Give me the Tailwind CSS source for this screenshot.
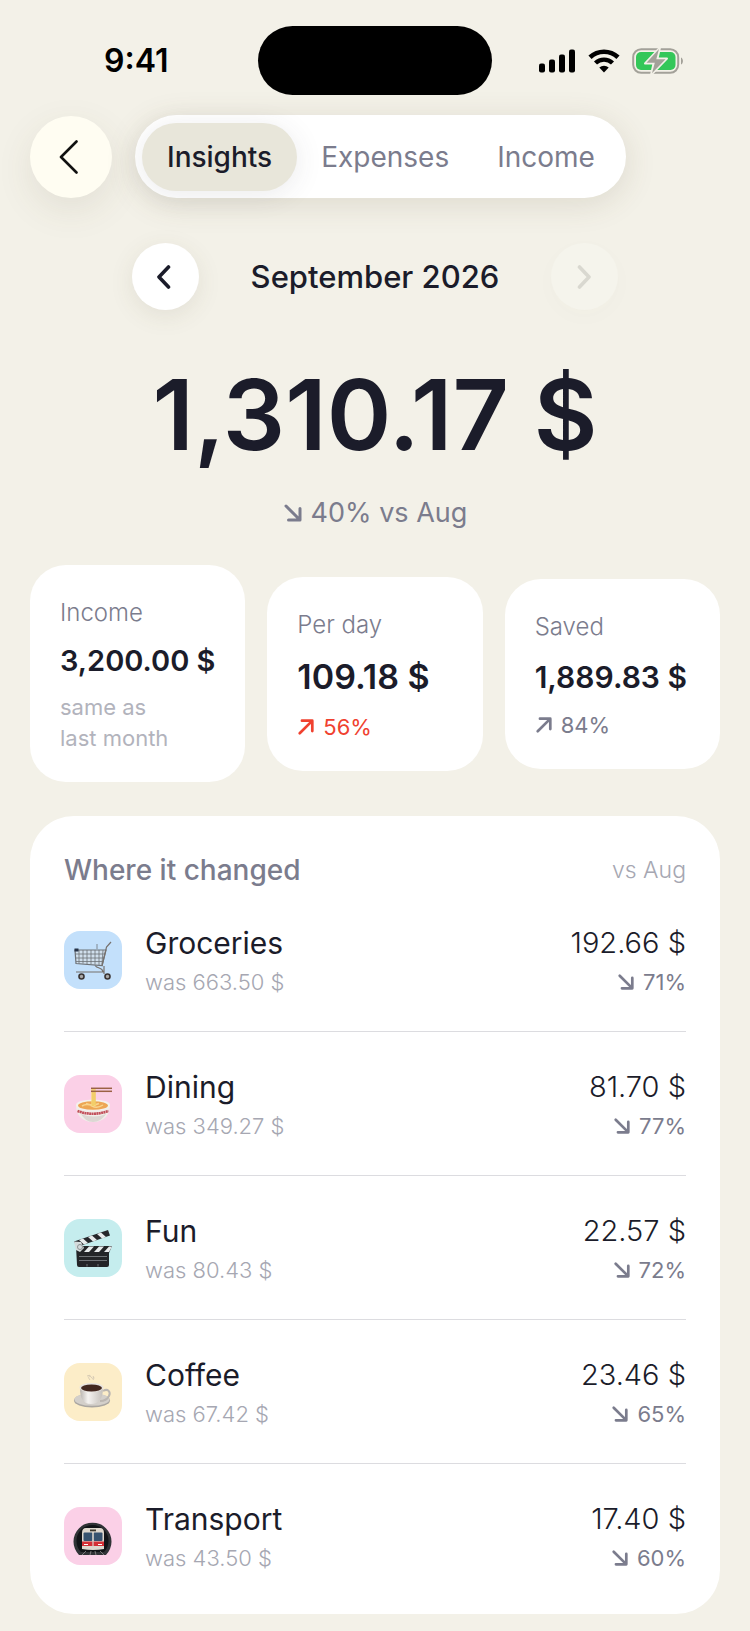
<!DOCTYPE html>
<html lang="en">

<head>
    <meta charset="UTF-8" />
    <meta name="viewport" content="width=device-width, initial-scale=1.0" />
    <title>Insights – September 2026</title>
    <script src="https://cdn.jsdelivr.net/npm/@tailwindcss/browser@4"></script>
</head>

<body class="bg-[#f3f1e8] min-h-screen font-['Inter','Liberation_Sans',sans-serif] text-[#1b1c2a]">
    <!-- shared icons -->
    <svg class="hidden" aria-hidden="true">
        <symbol id="arrow-down" viewBox="0 0 20 20">
            <path d="M3 3 16 16M17 5.500V17H5.500" fill="none" stroke="currentColor" stroke-width="3" stroke-linecap="round" stroke-linejoin="round" />
        </symbol>
        <symbol id="arrow-up" viewBox="0 0 20 20">
            <path d="M3 17 16 4M5.500 3H17V14.500" fill="none" stroke="currentColor" stroke-width="3" stroke-linecap="round" stroke-linejoin="round" />
        </symbol>
    </svg>

    <!-- STATUS BAR -->
    <div class="grid grid-cols-[1fr_234px_1fr] items-center pt-[26px]">
        <div class="pl-[104px] text-[32px] leading-9 font-semibold text-black">9:41</div>
        <div class="h-[69px] rounded-full bg-black"></div>
        <div class="flex items-center justify-end gap-3 pr-[66px]">
            <svg class="w-[37px] h-6" viewBox="0 0 37 24" aria-label="Signal">
                <rect x="0" y="14.500" width="6" height="9" rx="2" />
                <rect x="10" y="10.500" width="6" height="13" rx="2" />
                <rect x="20" y="5.500" width="6" height="18" rx="2" />
                <rect x="30" y="0.500" width="6" height="23" rx="2" />
            </svg>
            <svg class="w-8 h-6" viewBox="0 0 32 24" aria-label="Wi-Fi">
                <path d="M2 8.300a20.500 20.500 0 0 1 28 0" fill="none" stroke="#000" stroke-width="4.600" />
                <path d="M7.500 14a12.300 12.300 0 0 1 17 0" fill="none" stroke="#000" stroke-width="4.400" />
                <path d="M16 23.500 11.300 18.600a7 7 0 0 1 9.400 0Z" />
            </svg>
            <svg class="w-[52px] h-[26px] overflow-visible" viewBox="0 0 52 26" aria-label="Battery charging">
                <rect x="1.200" y="1.200" width="45" height="23.600" rx="8" fill="none" stroke="#a3a199" stroke-width="2" />
                <path d="M49 9.500c2.600 1 2.600 6 0 7Z" fill="#a3a199" />
                <rect x="4" y="4" width="39.500" height="18" rx="5" fill="#34c759" />
                <path d="M28-.5 13 15.500h8.500l-2.500 11.500L35 10.500H25.500Z" fill="#f3f1e8" stroke="#f3f1e8" stroke-width="2" stroke-linejoin="round" />
                <path d="M27 1 14.500 14.800h8.300l-2.800 10.500L33.500 11.200H24.300Z" fill="#a3a199" />
            </svg>
        </div>
    </div>

    <!-- HEADER -->
    <header class="flex items-center gap-[23px] px-[30px] pt-5">
        <button type="button" aria-label="Back" class="flex size-[82px] items-center justify-center rounded-full bg-[#fffdf2] pr-1 shadow-[0_12px_36px_rgba(90,80,50,0.10)]">
            <svg class="w-5 h-[34px]" viewBox="0 0 20 34">
                <path d="M17.500 1.500 2 17l15.500 15.500" fill="none" stroke="#111" stroke-width="2.600" stroke-linecap="round" stroke-linejoin="round" />
            </svg>
        </button>
        <nav class="flex h-[83px] items-center rounded-full bg-white px-[7px] text-[28px] leading-8 text-[#7b7c8d] shadow-[0_6px_32px_rgba(90,80,50,0.14)]">
            <button type="button" aria-pressed="true" class="h-[68px] rounded-full bg-[#e8e6da] px-[25px] font-medium text-[#1b1c2a] shadow-[0_4px_28px_rgba(60,60,70,0.10)]">Insights</button>
            <button type="button" class="h-[68px] px-6">Expenses</button>
            <button type="button" class="h-[68px] px-6">Income</button>
        </nav>
    </header>

    <main class="px-[30px] pb-[18px]">
        <!-- Month -->
        <div class="mx-auto mt-[45px] flex w-[486px] items-center justify-between">
            <button type="button" aria-label="Previous month" class="flex size-[67px] items-center justify-center rounded-full bg-white shadow-[0_6px_24px_rgba(90,80,50,0.10)]">
                <svg class="w-4 h-6 mr-1" viewBox="0 0 16 24">
                    <path d="M12.500 2 3 12l9.500 10" fill="none" stroke="currentColor" stroke-width="3.600" stroke-linecap="round" stroke-linejoin="round" />
                </svg>
            </button>
            <h1 class="text-[31px] leading-10 font-medium">September 2026</h1>
            <button type="button" disabled aria-label="Next month" class="flex size-[67px] items-center justify-center rounded-full bg-[#f5f4ec] text-[#d9d8d0] shadow-[0_6px_24px_rgba(90,80,50,0.02)]">
                <svg class="w-4 h-6" viewBox="0 0 16 24">
                    <path d="M3.500 2 13 12 3.500 22" fill="none" stroke="currentColor" stroke-width="3.600" stroke-linecap="round" stroke-linejoin="round" />
                </svg>
            </button>
        </div>

        <!-- Total -->
        <p class="mt-[55px] text-center text-[98px] leading-[100px] font-semibold whitespace-nowrap">1,310.17 $</p>
        <p class="mt-[31px] flex items-center justify-center gap-2 text-[27px] leading-[34px] text-[#7b7c8d]">
            <svg class="size-5"><use href="#arrow-down" /></svg>40% vs Aug
        </p>

        <!-- Summary cards -->
        <section class="mt-[35px] grid grid-cols-3 items-center gap-[22px]">
            <div class="rounded-[36px] bg-white px-[30px] pt-8 pb-7">
                <div class="text-[24px] leading-8 font-light text-[#7b7c8d]">Income</div>
                <div class="mt-[14px] text-[29px] leading-9 font-semibold whitespace-nowrap">3,200.00 $</div>
                <div class="mt-[13px] text-[22px] leading-[31px] text-[#b2b3bc]">same as<br />last month</div>
            </div>
            <div class="rounded-[36px] bg-white px-[30px] pt-8 pb-7">
                <div class="text-[24px] leading-8 font-light text-[#7b7c8d]">Per day</div>
                <div class="mt-[14px] text-[34px] leading-[44px] font-semibold whitespace-nowrap">109.18 $</div>
                <div class="mt-[13px] flex items-center gap-2 text-[22px] leading-[31px] text-[#f0412f]">
                    <svg class="size-[18px]"><use href="#arrow-up" /></svg>56%
                </div>
            </div>
            <div class="rounded-[36px] bg-white px-[30px] pt-8 pb-7">
                <div class="text-[24px] leading-8 font-light text-[#7b7c8d]">Saved</div>
                <div class="mt-[14px] text-[30px] leading-10 font-semibold whitespace-nowrap">1,889.83 $</div>
                <div class="mt-[13px] flex items-center gap-2 text-[22px] leading-[31px] text-[#7b7c8d]">
                    <svg class="size-[18px]"><use href="#arrow-up" /></svg>84%
                </div>
            </div>
        </section>

        <!-- Where it changed -->
        <section class="mt-[34px] rounded-[44px] bg-white px-[34px] pb-[6px]">
            <div class="flex items-center justify-between pt-9">
                <h2 class="text-[28px] leading-9 font-medium text-[#7b7c8d]">Where it changed</h2>
                <span class="text-[23px] leading-9 font-light text-[#a6a7b2]">vs Aug</span>
            </div>
            <ul class="divide-y divide-[#dcdce0]">
                <li class="flex h-[144px] items-center gap-[23px]">
                    <svg class="size-[58px] shrink-0" viewBox="0 0 58 58" aria-hidden="true">
                        <rect width="58" height="58" rx="16" fill="#c3e0fb" />
                        <path d="M11 19h31l-4 15.500-26-2Z" fill="#d9dee3" fill-opacity=".6" stroke="#6d7277" stroke-width="1.200" />
                        <path d="M11 23h30M11.500 27h28.500M12 30.500h27M15 19v13.500M19 19v13.500M23 19v14M27 19v14M31 19v14.500M35 19v15M39 19l-1 14M33 18v-5" fill="none" stroke="#6d7277" stroke-width=".8" />
                        <path d="M47 11l-4.500 5L38 35M31 34.500c3 4 7 1 8 6.500H12M40 35v8" fill="none" stroke="#77716d" stroke-width="1.200" />
                        <rect x="10.500" y="17.500" width="4" height="3" fill="#263247" />
                        <circle cx="17.500" cy="45.500" r="2.500" fill="#aaa" stroke="#3a3433" stroke-width="1.600" />
                        <circle cx="43.500" cy="45.500" r="2.500" fill="#aaa" stroke="#3a3433" stroke-width="1.600" />
                    </svg>
                    <div class="flex-1 pt-1">
                        <div class="text-[30px] leading-10">Groceries</div>
                        <div class="text-[22px] leading-[38px] font-light text-[#a6a7b2]">was 663.50 $</div>
                    </div>
                    <div class="pt-1 text-right">
                        <div class="text-[29px] leading-10 font-light">192.66 $</div>
                        <div class="flex items-center justify-end gap-2 text-[22px] leading-[38px] text-[#7b7c8d]"><svg class="size-[18px]"><use href="#arrow-down" /></svg>71%</div>
                    </div>
                </li>
                <li class="flex h-[144px] items-center gap-[23px]">
                    <svg class="size-[58px] shrink-0" viewBox="0 0 58 58" aria-hidden="true">
                        <rect width="58" height="58" rx="16" fill="#fbd0e7" />
                        <path d="M12 30c0 9 5 17 17 17s17-8 17-17Z" fill="#f1eeea" />
                        <path d="M17 39c3 5 7 8 12 8s10-3 13-8q-12 5-25 0Z" fill="#dcd7d3" />
                        <ellipse cx="29" cy="30" rx="17" ry="5.500" fill="#f4f1ec" />
                        <ellipse cx="29" cy="30.500" rx="15" ry="4.300" fill="#eda653" />
                        <path d="M18 31q5-3 10 0t11-1M22 28.500q6 3 13 0" fill="none" stroke="#f8d58e" stroke-width="1.500" />
                        <path d="M13.500 36q15 5.500 31 0" fill="none" stroke="#c2505b" stroke-width="2.600" stroke-dasharray="2 .4" />
                        <path d="M29.500 13v18" stroke="#f7d878" stroke-width="4.400" />
                        <path d="M29 16v15M31 16v14" stroke="#eab94c" stroke-width=".6" />
                        <path d="M27 13.300h21" stroke="#9b6145" stroke-width="1.500" />
                        <path d="M27 16.300h21" stroke="#9b6145" stroke-width="1.500" />
                    </svg>
                    <div class="flex-1 pt-1">
                        <div class="text-[30px] leading-10">Dining</div>
                        <div class="text-[22px] leading-[38px] font-light text-[#a6a7b2]">was 349.27 $</div>
                    </div>
                    <div class="pt-1 text-right">
                        <div class="text-[29px] leading-10 font-light">81.70 $</div>
                        <div class="flex items-center justify-end gap-2 text-[22px] leading-[38px] text-[#7b7c8d]"><svg class="size-[18px]"><use href="#arrow-down" /></svg>77%</div>
                    </div>
                </li>
                <li class="flex h-[144px] items-center gap-[23px]">
                    <svg class="size-[58px] shrink-0" viewBox="0 0 58 58" aria-hidden="true">
                        <rect width="58" height="58" rx="16" fill="#c5edee" />
                        <path d="M10 22.500 44 11l2 5.500L13 28Z" fill="#25272b" />
                        <path d="m15 21 4-1.500 5 4.500-4 1.500ZM24 18l4-1.500 5 4.500-4 1.500ZM33 15l4-1.500 5 4.500-4 1.500Z" fill="#e8ebec" />
                        <path d="M12 27h36l-3 7v12q0 2-2 2H15q-2 0-2-2Z" fill="#232427" />
                        <path d="m20 33 5-5.500h5L25 33ZM30 33l5-5.500h5L35 33ZM40 33l5-5.500h3L45 33Z" fill="#e8ebec" />
                        <path d="M10 22.500 17 23l3 6-4 4-4-2Z" fill="#d5dbdc" />
                        <circle cx="16" cy="28" r="2.500" fill="none" stroke="#8b9092" />
                        <path d="M15 37.500h28M15 41.500h28M23 45v2.500M34 45v2.500" stroke="#83868a" stroke-width=".8" />
                    </svg>
                    <div class="flex-1 pt-1">
                        <div class="text-[30px] leading-10">Fun</div>
                        <div class="text-[22px] leading-[38px] font-light text-[#a6a7b2]">was 80.43 $</div>
                    </div>
                    <div class="pt-1 text-right">
                        <div class="text-[29px] leading-10 font-light">22.57 $</div>
                        <div class="flex items-center justify-end gap-2 text-[22px] leading-[38px] text-[#7b7c8d]"><svg class="size-[18px]"><use href="#arrow-down" /></svg>72%</div>
                    </div>
                </li>
                <li class="flex h-[144px] items-center gap-[23px]">
                    <svg class="size-[58px] shrink-0" viewBox="0 0 58 58" aria-hidden="true">
                        <defs>
                            <linearGradient id="cup">
                                <stop offset="0" stop-color="#b9b4af" />
                                <stop offset=".35" stop-color="#f5f3f1" />
                                <stop offset="1" stop-color="#c4bfba" />
                            </linearGradient>
                        </defs>
                        <rect width="58" height="58" rx="16" fill="#fcedc8" />
                        <ellipse cx="28" cy="37.500" rx="18" ry="7" fill="#aaa6a1" />
                        <ellipse cx="28" cy="36.500" rx="17.500" ry="6.300" fill="#d3cfca" />
                        <path d="M39 28c5-3 8 1 6 5s-6 5-9 5" fill="none" stroke="#bbb6b1" stroke-width="2" />
                        <path d="M16 25c0 10 3 16 11 16s12-6 12-16Z" fill="url(#cup)" />
                        <ellipse cx="27.500" cy="24.500" rx="12" ry="4.500" fill="#e8e4df" />
                        <ellipse cx="27.500" cy="25" rx="10.500" ry="3.500" fill="#432820" />
                        <path d="M23 13q3-2 4 1t3 0M26 17q-3-2 0-5M29 17q2-2 0-4" fill="none" stroke="#d8ccb5" stroke-width="1" />
                    </svg>
                    <div class="flex-1 pt-1">
                        <div class="text-[30px] leading-10">Coffee</div>
                        <div class="text-[22px] leading-[38px] font-light text-[#a6a7b2]">was 67.42 $</div>
                    </div>
                    <div class="pt-1 text-right">
                        <div class="text-[29px] leading-10 font-light">23.46 $</div>
                        <div class="flex items-center justify-end gap-2 text-[22px] leading-[38px] text-[#7b7c8d]"><svg class="size-[18px]"><use href="#arrow-down" /></svg>65%</div>
                    </div>
                </li>
                <li class="flex h-[144px] items-center gap-[23px]">
                    <svg class="size-[58px] shrink-0" viewBox="0 0 58 58" aria-hidden="true">
                        <rect width="58" height="58" rx="16" fill="#fbd0e7" />
                        <path d="M15 48a19 19 0 1 1 27 0Z" fill="#303336" />
                        <path d="M17 45a16 16 0 1 1 23 0Z" fill="#111417" />
                        <path d="M18 42V26q0-5 4-5h14q4 0 4 5v16q-11 2-22 0Z" fill="#ded8ce" />
                        <rect x="19.500" y="25.500" width="9" height="8.500" rx="1" fill="#36536f" />
                        <rect x="29.500" y="25.500" width="9" height="8.500" rx="1" fill="#36536f" />
                        <rect x="26" y="22.500" width="6" height="1.800" fill="#3b372d" />
                        <path d="M18 34.500h22V39H18Z" fill="#d42f35" />
                        <path d="M28.400 25.500h1.200V41h-1.200Z" fill="#d9d4cb" />
                        <path d="M20 37.500h4M34 37.500h4" stroke="#fff" stroke-width="1.200" />
                        <path d="M22 44l-4 4M36 44l4 4M27 44l-1 4M31 44l1 4" stroke="#92918f" stroke-width=".8" />
                    </svg>
                    <div class="flex-1 pt-1">
                        <div class="text-[30px] leading-10">Transport</div>
                        <div class="text-[22px] leading-[38px] font-light text-[#a6a7b2]">was 43.50 $</div>
                    </div>
                    <div class="pt-1 text-right">
                        <div class="text-[29px] leading-10 font-light">17.40 $</div>
                        <div class="flex items-center justify-end gap-2 text-[22px] leading-[38px] text-[#7b7c8d]"><svg class="size-[18px]"><use href="#arrow-down" /></svg>60%</div>
                    </div>
                </li>
            </ul>
        </section>
    </main>
</body>

</html>
